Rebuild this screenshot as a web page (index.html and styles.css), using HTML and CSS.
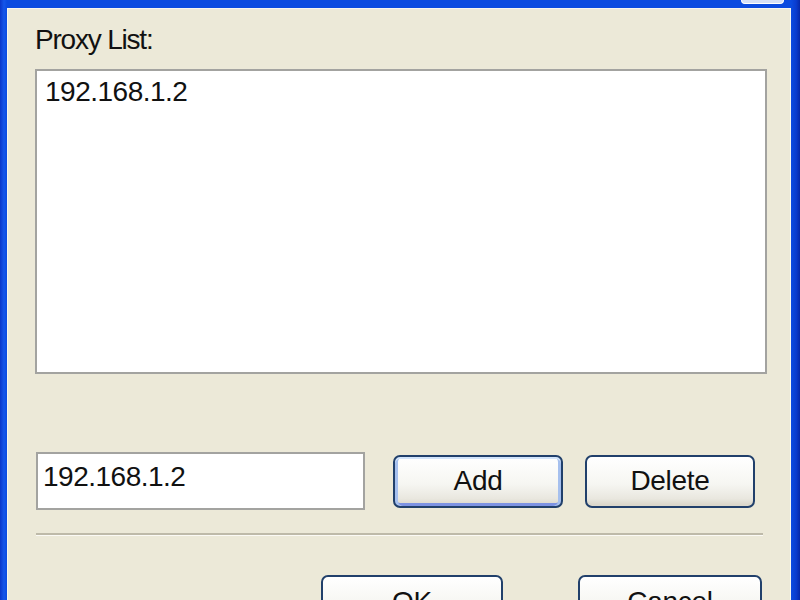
FILE: index.html
```html
<!DOCTYPE html>
<html lang="en">
<head>
    <meta charset="UTF-8">
    <title>Proxy List</title>
    <link rel="stylesheet" href="styles.css">
</head>
<body>
    <div class="window">
        <div class="close-tab"></div>
        <div class="dialog">
            <div class="label">Proxy List:</div>
            <div class="proxy-list">
                <div class="item">192.168.1.2</div>
            </div>
            <div class="entry-row">
                <div class="address">192.168.1.2</div>
                <button class="btn btn-default btn-add">Add</button>
                <button class="btn btn-delete">Delete</button>
            </div>
            <div class="separator"></div>
            <div class="footer">
                <button class="btn btn-ok">OK</button>
                <button class="btn btn-cancel">Cancel</button>
            </div>
        </div>
    </div>
</body>
</html>
```

FILE: styles.css
```css
html, body {
    margin: 0;
    height: 100%;
    overflow: hidden;
}
body {
    font-family: "Liberation Sans", Arial, sans-serif;
    font-size: 28px;
    color: #111;
    background-color: #0b45dc;
}
.window {
    position: relative;
    height: 100%;
    box-sizing: border-box;
    padding: 8px 9px 0 7px;
    background: linear-gradient(to right, #0a36c9 0, #1556ea 4px, #0b4be0 7px, #0b4be0 calc(100% - 9px), #0a3ccf calc(100% - 4px), #0628a8 100%);
}
.close-tab {
    position: absolute;
    top: 0;
    left: 741px;
    width: 41px;
    height: 3px;
    background-color: #d6e0f6;
    border: 1px solid #fff;
    border-top: none;
    border-radius: 0 0 4px 4px;
}
.dialog {
    height: 100%;
    box-sizing: border-box;
    background-color: #ece9d8;
    border: 1px solid #f7f6ef;
    border-bottom: none;
    padding: 15px 0 0 27px;
}
.label {
    line-height: 32px;
    letter-spacing: -1.2px;
}
.proxy-list {
    margin-top: 13px;
    width: 732px;
    height: 305px;
    box-sizing: border-box;
    border: 2px solid #a3a3a0;
    background-color: #fff;
    padding: 5px 8px 0;
}
.item {
    line-height: 32px;
    letter-spacing: -0.5px;
}
.entry-row {
    margin: 78px 0 0 1px;
    display: flex;
    align-items: center;
}
.address {
    width: 329px;
    height: 58px;
    box-sizing: border-box;
    border: 2px solid #a3a3a0;
    background-color: #fff;
    padding: 7px 5px 0;
    line-height: 32px;
    letter-spacing: -0.5px;
}
.btn {
    height: 53px;
    box-sizing: border-box;
    padding: 0;
    font-family: inherit;
    font-size: 28px;
    color: #111;
    letter-spacing: -0.3px;
    border: 2px solid #21406b;
    border-radius: 7px;
    background: linear-gradient(to bottom, #ffffff 0, #f6f6f2 55%, #e9e7df 85%, #d8d4c8 100%);
    box-shadow: inset 0 -2px 0 #dcd8cc;
}
.btn-default {
    box-shadow: inset 0 2px 0 #d2e4fb, inset 3px 0 0 #a6c0ee, inset -3px 0 0 #a6c0ee, inset 0 -3px 0 #7d93e3;
}
.btn-add {
    width: 170px;
    margin-left: 28px;
}
.btn-delete {
    width: 170px;
    margin-left: 22px;
}
.separator {
    margin: 23px 0 0 1px;
    width: 727px;
    border-top: 2px solid #bebaa9;
    border-bottom: 1px solid #fbfaf5;
}
.footer {
    margin-top: 39px;
    display: flex;
}
.btn-ok {
    width: 182px;
    margin-left: 286px;
}
.btn-cancel {
    width: 184px;
    margin-left: 75px;
}
```
